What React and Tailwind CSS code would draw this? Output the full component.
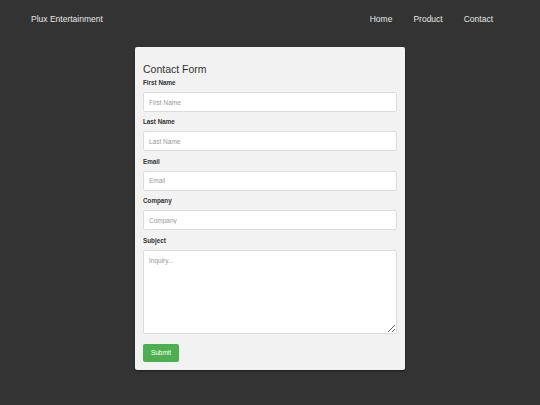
import React from "react";

const fields = [
  { label: "First Name", placeholder: "First Name" },
  { label: "Last Name", placeholder: "Last Name" },
  { label: "Email", placeholder: "Email" },
  { label: "Company", placeholder: "Company" },
];

function Label({ children }) {
  return (
    <label className="block h-[8px] text-[6.3px] leading-[8px] font-bold text-[#333]">
      {children}
    </label>
  );
}

export default function App() {
  return (
    <div
      className="min-h-[405px] w-full bg-[#333333]"
      style={{ fontFamily: '"Liberation Sans", Arial, sans-serif' }}
    >
      {/* top bar */}
      <header className="h-[39px] flex items-center justify-between pl-[31px] pr-[47px] text-[8.5px] text-[#e6e6e6]">
        <span>Plux Entertainment</span>
        <nav className="flex gap-[21px]">
          <a>Home</a>
          <a>Product</a>
          <a>Contact</a>
        </nav>
      </header>

      <div className="flex justify-center pt-[8px] pb-[36px]">
        <form className="w-[270px] bg-[#f2f2f2] rounded-[2px] shadow-[0_1px_2px_rgba(0,0,0,0.5)] px-[8px] pt-[15px] pb-[8px]">
          <h2 className="text-[10.5px] leading-[14px] text-[#333] mb-[3px]">Contact Form</h2>

          {fields.map((f) => (
            <div key={f.label} className="mb-[6.4px]">
              <Label>{f.label}</Label>
              <input
                placeholder={f.placeholder}
                className="mt-[5px] block w-full h-[20px] bg-white border border-[#dcdcdc] rounded-[2px] px-[5px] text-[6.5px] placeholder:text-[#999] outline-none"
              />
            </div>
          ))}

          <div className="mb-[10px]">
            <Label>Subject</Label>
            <textarea
              placeholder="Inquiry..."
              className="mt-[5px] block w-full h-[84px] bg-white border border-[#dcdcdc] rounded-[2px] px-[5px] py-[5px] text-[6.5px] placeholder:text-[#999] outline-none"
            />
          </div>

          <button
            type="button"
            className="block w-[36px] h-[18px] bg-[#4caf50] text-white text-[6.5px] leading-[18px] rounded-[2px]"
          >
            Submit
          </button>
        </form>
      </div>
    </div>
  );
}
